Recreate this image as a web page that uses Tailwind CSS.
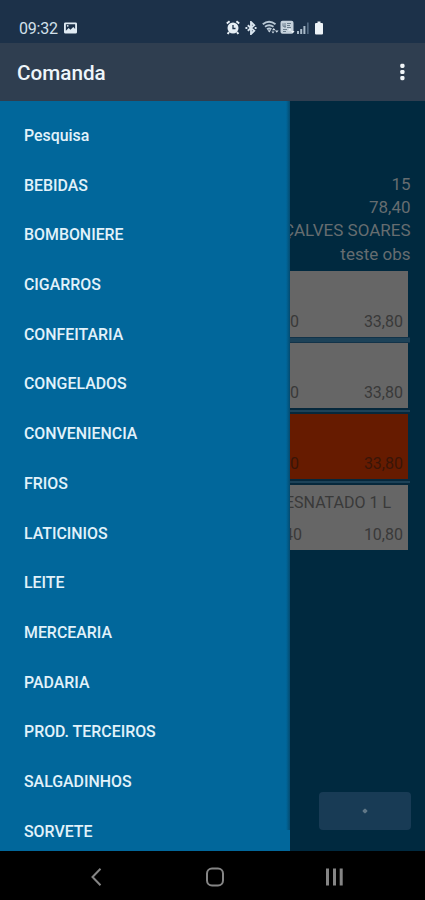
<!DOCTYPE html>
<html lang="pt-BR">
<head>
<meta charset="utf-8">
<meta name="viewport" content="width=device-width, initial-scale=1">
<title>Comanda</title>
<script src="https://cdn.jsdelivr.net/npm/@tailwindcss/browser@4"></script>
</head>
<body class="w-[425px] h-[900px] overflow-hidden bg-black font-[Roboto,sans-serif]">
<div class="flex h-[900px] w-[425px] flex-col">
  <div class="flex h-[43px] shrink-0 items-center bg-[#1c3149] pt-[12px] pl-[19px] text-[#d3e0eb]">
    <span class="w-[45px] pt-[2px] text-[16px] leading-none tracking-[-0.2px] whitespace-nowrap">09:32</span>
    <svg class="h-[12px] w-[13px]" viewBox="0 0 14 12"><path fill="#e0ebf3" fill-rule="evenodd" d="M1.500 0h11q1.500 0 1.500 1.500v9q0 1.500-1.500 1.500h-11Q0 12 0 10.500v-9Q0 0 1.500 0zM2 2v7l3-3 2 2 3-3 2 2V2z"/><circle cx="4" cy="3.700" r="1" fill="#e0ebf3"/></svg>
    <svg class="ml-[149px] h-[15px] w-[14px]" viewBox="0 0 14 15"><circle cx="7" cy="8" r="5.500" fill="#e6eef4"/><path d="M.8 3.500 3.600 1.300M13.200 3.500 10.400 1.300M3 12l-1.300 2M11 12l1.300 2" stroke="#e6eef4" stroke-width="2"/><path d="M7 5v3.500h2.500" fill="none" stroke="#1c3149" stroke-width="1.300"/></svg>
    <svg class="ml-[5px] h-[14px] w-[12px]" viewBox="0 0 13 15"><path d="m3 4.500 7 6L6.500 14V1L10 4.500l-7 6" fill="none" stroke="#d8e4ee" stroke-width="2"/><path d="M.5 6.500h2v2h-2zM10.500 6.500h2v2h-2z" fill="#d8e4ee"/></svg>
    <svg class="ml-[5px] h-[15px] w-[17px]" viewBox="0 0 17 15"><path d="M.8 4.300Q7 -.8 13.500 4.300M3 6.800q4-3 8.500 0M5 9.300q2.200-1.700 4.400 0" fill="none" stroke="#b9c9d6" stroke-width="1.900"/><path d="m7.300 12.500-1.800-2.200h3.600zM10 10.200l1.800-2.200 1.800 2.200zM13 10.500h3.600l-1.800 2.200zM9.500 11.500h3l-1.500 2z" fill="#d2dee8"/></svg>
    <svg class="ml-[1px] h-[15px] w-[15px]" viewBox="0 0 15 15"><rect x=".5" y=".8" width="13" height="13" rx="2" fill="#c5d1db"/><path d="M3 3.300v3h3M5 3v5M7 3.500h4M7 5.500h3M7 7.500h4M3 9.500h4M3 11.500h3" fill="none" stroke="#6a7d8c" stroke-width="1"/><path d="m8 10.500 1.800-2 1.800 2zM11 11h3.600l-1.800 2.300z" fill="#eff5fa"/></svg>
    <svg class="ml-[2px] h-[14px] w-[13px]" viewBox="0 0 13 14"><path d="M0 10h2v3H0zM3.200 8h2v5h-2zM6.400 5h2v8h-2z" fill="#a9bac9"/><path d="M10 1.500h1.700V13H10z" fill="#526980"/></svg>
    <svg class="ml-[4px] h-[14px] w-[10px]" viewBox="0 0 9 14"><path d="M3 .5h3V2h1.500q1 0 1 1v9.500q0 1-1 1h-6q-1 0-1-1V3q0-1 1-1H3z" fill="#edf3f7"/></svg>
  </div>
  <header class="flex h-[58px] shrink-0 items-center justify-between bg-[#2f3e50] pr-[20px] pl-[17px]">
    <h1 class="pt-[2px] text-[20.700px] leading-none font-medium text-[#eef5fa]">Comanda</h1>
    <svg class="h-[18px] w-[5px]" viewBox="0 0 5 18"><g fill="#f1f5f8"><rect x=".3" y=".8" width="4.200" height="4.200" rx="1.400"/><rect x=".3" y="6.900" width="4.200" height="4.200" rx="1.400"/><rect x=".3" y="13" width="4.200" height="4.200" rx="1.400"/></g></svg>
  </header>
  <div class="flex h-[750px] shrink-0 bg-[#00293f]">
    <nav class="relative z-10 w-[290px] shrink-0 bg-[#01679b] pt-[10px] text-[#e2f2fa]">
      <div class="absolute top-0 right-0 h-[729px] w-[4px] bg-linear-to-r from-[#01679b] to-[#034b70]"></div>
      <ul class="text-[15.900px] font-medium leading-none whitespace-nowrap *:flex *:h-[49.710px] *:items-center *:pl-[24px]">
        <li>Pesquisa</li><li>BEBIDAS</li><li>BOMBONIERE</li><li>CIGARROS</li><li>CONFEITARIA</li><li>CONGELADOS</li><li>CONVENIENCIA</li><li>FRIOS</li><li>LATICINIOS</li><li>LEITE</li><li>MERCEARIA</li><li>PADARIA</li><li>PROD. TERCEIROS</li><li>SALGADINHOS</li><li>SORVETE</li>
      </ul>
    </nav>
    <main class="flex w-[135px] flex-col overflow-hidden pt-[72px] text-[#666d70]">
      <div class="flex flex-col items-end pr-[14.500px] text-[17px] leading-[23.200px] whitespace-nowrap">
        <span>15</span><span>78,40</span><span>ÇALVES SOARES</span><span>teste obs</span>
      </div>
      <div class="mt-[5px] w-[120px] text-[16px] leading-none whitespace-nowrap text-[#393939]">
        <div class="flex h-[66px] w-[118px] items-end justify-between bg-[#666] pr-[5px] pb-[7px]"><span>0</span><span>33,80</span></div>
        <div class="h-[6px] border-y border-[#123349] bg-[#1d4258]"></div>
        <div class="flex h-[65px] w-[118px] items-end justify-between bg-[#666] pr-[5px] pb-[7px]"><span>0</span><span>33,80</span></div>
        <div class="h-[6px] border-y-2 border-[#06283c] bg-[#1d4258]"></div>
        <div class="flex h-[65px] w-[118px] items-end justify-between bg-[#661b00] pr-[5px] pb-[7px] text-[#391508]"><span>0</span><span>33,80</span></div>
        <div class="h-[6px] border-y-2 border-[#06283c] bg-[#1d4258]"></div>
        <div class="flex h-[65px] w-[118px] flex-col justify-between bg-[#666] pt-[10px] pb-[7px]">
          <div class="-ml-[5px]">ESNATADO 1 L</div>
          <div class="flex justify-between pr-[5px]"><span class="-ml-[6px]">40</span><span>10,80</span></div>
        </div>
      </div>
      <button class="mt-auto mr-[14px] mb-[21px] flex h-[38px] w-[92px] shrink-0 items-center justify-center self-end rounded-[4px] bg-[#183b55]"><span class="size-[4px] rotate-45 rounded-[1px] bg-[#607787]"></span></button>
    </main>
  </div>
  <footer class="flex h-[49px] shrink-0 items-center bg-black pt-[3px] pl-[90px]">
    <svg class="h-[20px] w-[12px]" viewBox="0 0 12 20"><path d="M10.500 1.800 2.500 10l8 8.200" fill="none" stroke="#858585" stroke-width="2"/></svg>
    <svg class="ml-[103px] h-[20px] w-[20px]" viewBox="0 0 20 20"><rect x="2" y="1.500" width="16" height="17" rx="5" fill="none" stroke="#858585" stroke-width="2"/></svg>
    <svg class="ml-[100px] h-[18px] w-[19px]" viewBox="0 0 19 18"><path d="M1 .5h3v17H1zM8 .5h3v17H8zM14.700 .5h3v17h-3z" fill="#858585"/></svg>
  </footer>
</div>
</body>
</html>
